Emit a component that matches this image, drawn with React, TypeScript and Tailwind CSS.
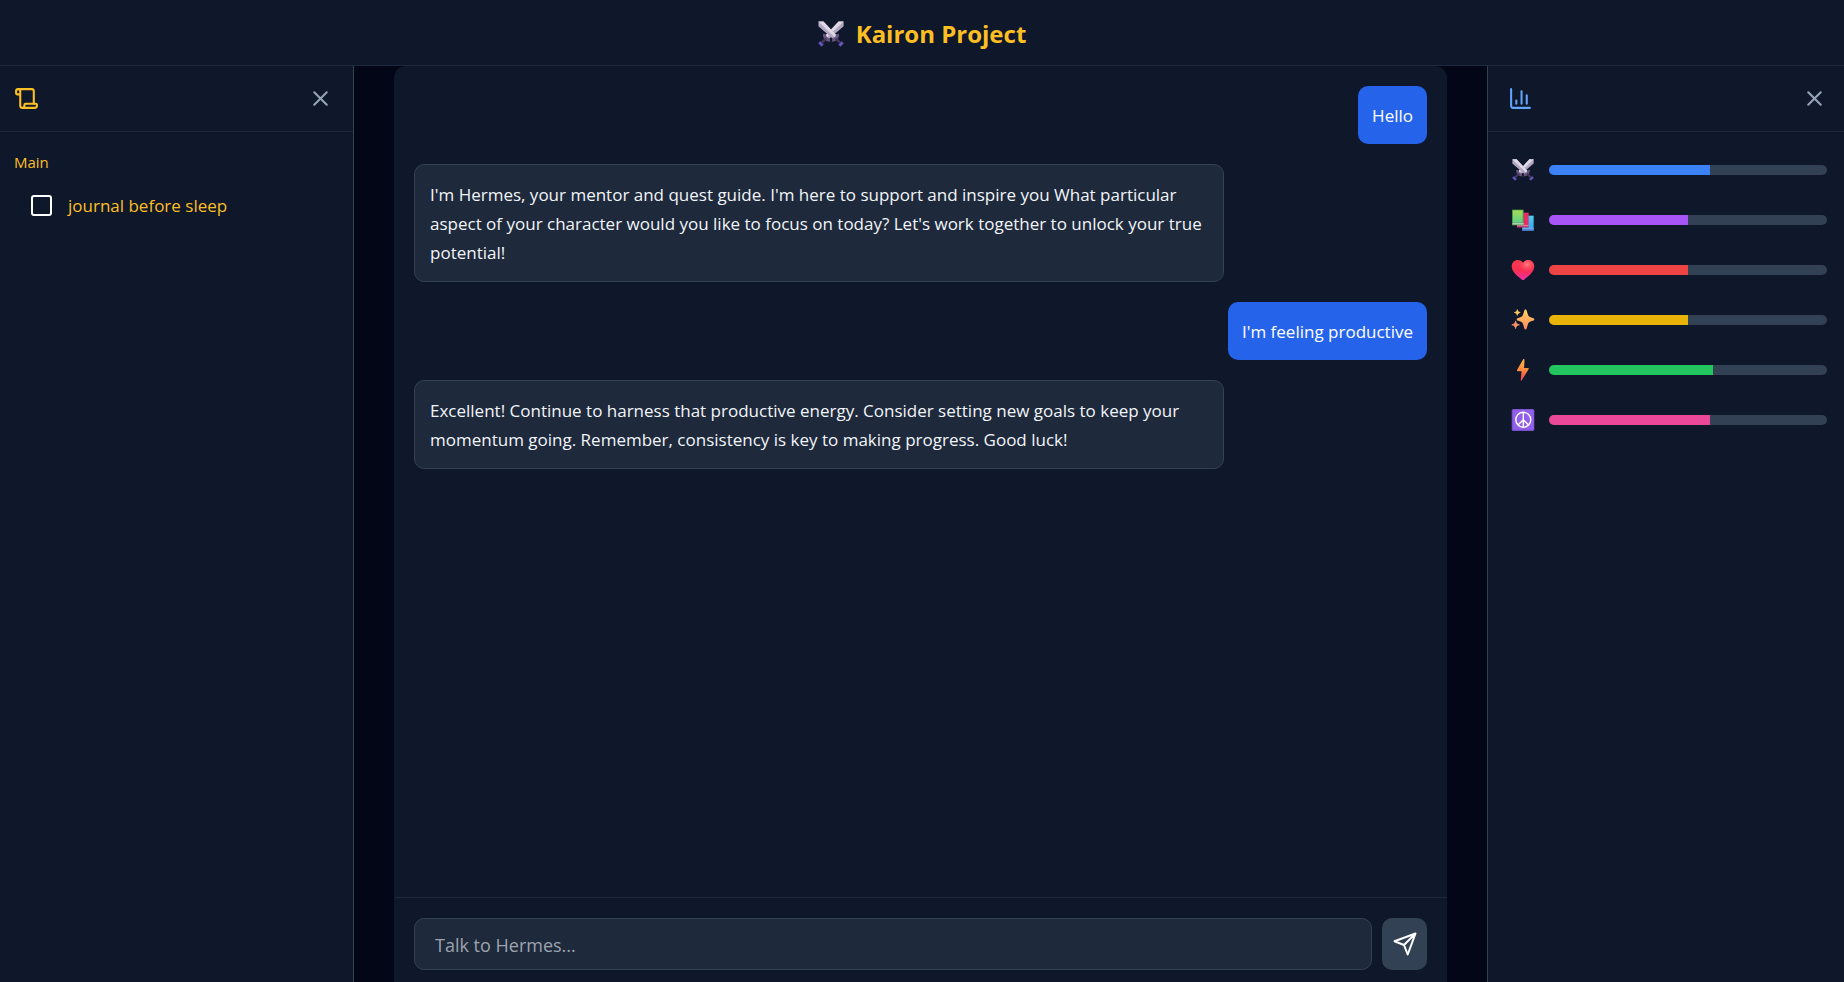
import { useState } from "react";
import type { FormEvent, ReactNode } from "react";
import { ChartColumn, Scroll, X } from "lucide-react";

function Swords({ className }: { className: string }) {
  const sword = (
    <>
      <path d="M.5.500h6.200L23.500 18.400 19 22.600.5 6.400z" fill="#b3a6c2" />
      <path d="M.5.500h6.200L23.500 18.400l-2.300 2.100L.5.500z" fill="#e0d9e6" />
      <path d="M25.800 15.800c.8 5.200-2.800 9.400-8.800 9.700l.6-4.200c2.800-.3 4.500-2 4.700-4.900z" fill="#69567f" />
      <path d="M22 21.600l5 4.800" stroke="#4a3560" strokeWidth="3" />
      <path d="M29.300 25.300l1.900 2-3.500 3.700-2.200-1.900z" fill="#6d5cc0" stroke="#5f50b0" strokeWidth="1" />
    </>
  );
  return (
    <svg viewBox="0 0 32 32" className={className} fill="none" aria-hidden="true">
      <g transform="matrix(-1 0 0 1 32 0)">{sword}</g>
      <g>{sword}</g>
    </svg>
  );
}

function Books() {
  return (
    <svg viewBox="0 0 66 66" className="size-6 p-px" aria-hidden="true">
      <defs>
        <linearGradient id="bookGreen" x1="0" y1="0" x2="0" y2="1">
          <stop offset="0" stopColor="#a6db52" />
          <stop offset="1" stopColor="#5fd08b" />
        </linearGradient>
        <linearGradient id="bookBlue" x1="0" y1="0" x2="0" y2="1">
          <stop offset="0" stopColor="#4fd0f5" />
          <stop offset="1" stopColor="#2f9df0" />
        </linearGradient>
      </defs>
      <path d="M31 20h34v45H31z" fill="url(#bookBlue)" />
      <path d="M31 56h34v4H31z" fill="#6bb0ee" />
      <path d="M31 60h34v5H31z" fill="#5a80cf" />
      <path d="M15 11h35v44H15z" fill="#e62e64" />
      <path d="M15 49h35v3H15z" fill="#e8a3bd" />
      <path d="M15 52h35v3H15z" fill="#a83a72" />
      <path d="M0 2h35v47H0z" fill="#4f9a50" />
      <path d="M3 4h29v37H3z" fill="url(#bookGreen)" />
      <path d="M2 43h33v3H2z" fill="#e5e6f0" />
    </svg>
  );
}

const heartPath =
  "M12 5C10.500 2.600 8.600 2 6.900 2 3.400 2 .7 4.700.7 8.300c0 5.800 5.800 9.700 9.900 13.200.9.8 1.900.8 2.800 0 4.100-3.500 9.900-7.400 9.900-13.200C23.300 4.700 20.600 2 17.100 2c-1.700 0-3.600.6-5.100 3z";

function Heart() {
  return (
    <svg viewBox="0 0 24 24" className="size-6" aria-hidden="true">
      <defs>
        <linearGradient id="heart" x1="0" y1="0" x2="0" y2="1">
          <stop offset="0" stopColor="#f83a4c" />
          <stop offset=".55" stopColor="#f92f55" />
          <stop offset="1" stopColor="#ee2fae" />
        </linearGradient>
        <radialGradient id="heartShine" cx=".68" cy=".22" r=".35">
          <stop offset="0" stopColor="#ff7d7d" />
          <stop offset="1" stopColor="#ff5a6a" stopOpacity="0" />
        </radialGradient>
      </defs>
      <path d={heartPath} fill="url(#heart)" />
      <path d={heartPath} fill="url(#heartShine)" />
    </svg>
  );
}

function Sparkles() {
  return (
    <svg viewBox="0 0 24 24" className="size-6" aria-hidden="true">
      <defs>
        <linearGradient id="spark" x1="0" y1="0" x2="0" y2="1">
          <stop offset="0" stopColor="#ffd75e" />
          <stop offset="1" stopColor="#ff8560" />
        </linearGradient>
      </defs>
      <path d="M14.500 1.500c.7 0 1 .5 1.200 1.200l1.200 3.900c.5 1.500 1.200 2.200 2.600 2.700l3 1c1.100.4 1.100 1.800 0 2.200l-3 1c-1.400.5-2.100 1.200-2.600 2.700l-1.200 4.300c-.4 1.200-2 1.200-2.400 0l-1.200-4.300c-.5-1.500-1.200-2.200-2.600-2.700l-3-1c-1.100-.4-1.100-1.800 0-2.200l3-1c1.400-.5 2.100-1.200 2.600-2.700l1.200-3.900c.2-.7.500-1.200 1.200-1.200z" fill="url(#spark)" />
      <path d="M6.300 1.600c.5 1.900 1 2.400 2.900 2.900-1.900.5-2.400 1-2.900 2.900-.5-1.900-1-2.400-2.900-2.900 1.900-.5 2.400-1 2.900-2.900z" fill="#ffc866" stroke="#ffc866" strokeWidth=".7" />
      <path d="M4.600 12.900c.6 2.500 1.300 3.200 3.800 3.900-2.500.6-3.200 1.300-3.800 3.900C4 18.100 3.300 17.400.8 16.800c2.500-.7 3.200-1.400 3.800-3.900z" fill="#ff9167" stroke="#ff9167" strokeWidth=".7" />
    </svg>
  );
}

function Bolt() {
  return (
    <svg viewBox="0 0 24 24" className="size-6" aria-hidden="true">
      <defs>
        <linearGradient id="bolt" x1="0" y1="0" x2="0" y2="1">
          <stop offset="0" stopColor="#ffb84d" />
          <stop offset=".5" stopColor="#ff8a3d" />
          <stop offset="1" stopColor="#ee3d52" />
        </linearGradient>
      </defs>
      <path d="M12.200 1.300 6 12.100c-.3.6 0 1.100.6 1.100h4l-.9 9c-.1.600.5.800.9.300l7.100-11.400c.3-.5 0-1-.6-1h-4l.4-8.400c0-.8-.9-1-1.300-.4z" fill="url(#bolt)" />
    </svg>
  );
}

function Peace() {
  return (
    <svg viewBox="0 0 24 24" className="size-6" aria-hidden="true">
      <rect x=".7" y="1" width="22.600" height="22" rx="1.600" fill="#7650c8" />
      <rect x="1.800" y="1.800" width="21" height="20" rx="1.200" fill="#925fea" />
      <g fill="none" stroke="#fff" strokeWidth="1.400">
        <circle cx="12.300" cy="11.800" r="7.500" />
        <path d="M12.300 4.300v15M12.300 11.800l-5.300 5.300M12.300 11.800l5.300 5.300" />
      </g>
    </svg>
  );
}

type Stat = { name: string; value: number; bar: string; icon: ReactNode };

const stats: Stat[] = [
  { name: "Strength", value: 58, bar: "bg-[#3b82f6]", icon: <Swords className="size-6 p-px" /> },
  { name: "Knowledge", value: 50, bar: "bg-[#a855f7]", icon: <Books /> },
  { name: "Health", value: 50, bar: "bg-[#ef4444]", icon: <Heart /> },
  { name: "Charisma", value: 50, bar: "bg-[#eab308]", icon: <Sparkles /> },
  { name: "Energy", value: 59, bar: "bg-[#22c55e]", icon: <Bolt /> },
  { name: "Peace", value: 58, bar: "bg-[#ec4899]", icon: <Peace /> },
];

type Message = { from: "user" | "mentor"; text: string };

const initialMessages: Message[] = [
  { from: "user", text: "Hello" },
  {
    from: "mentor",
    text: "I'm Hermes, your mentor and quest guide. I'm here to support and inspire you What particular aspect of your character would you like to focus on today? Let's work together to unlock your true potential!",
  },
  { from: "user", text: "I'm feeling productive" },
  {
    from: "mentor",
    text: "Excellent! Continue to harness that productive energy. Consider setting new goals to keep your momentum going. Remember, consistency is key to making progress. Good luck!",
  },
];

function PanelHeader({ icon, label, className }: { icon: ReactNode; label: string; className: string }) {
  return (
    <div className={`flex items-center justify-between border-b border-[#1e293b] py-5 ${className}`}>
      {icon}
      <button type="button" aria-label={label} className="text-[#94a3b8]">
        <X className="size-[25px]" />
      </button>
    </div>
  );
}

export default function App() {
  const [messages, setMessages] = useState(initialMessages);
  const [draft, setDraft] = useState("");

  const send = (event: FormEvent) => {
    event.preventDefault();
    if (!draft.trim()) return;
    setMessages([...messages, { from: "user", text: draft }]);
    setDraft("");
  };

  return (
    <div className="flex h-screen flex-col bg-[#020617] font-['Open_Sans','Noto_Sans',sans-serif] text-[17px] leading-[29px] text-[#f1f5f9]">
      <header className="flex h-[66px] shrink-0 items-center justify-center gap-3 border-b border-[#1e293b] bg-[#0f172a] pt-0.5">
        <Swords className="size-[26px]" />
        <h1 className="text-2xl font-bold text-[#fbbf24]">Kairon Project</h1>
      </header>

      <div className="flex min-h-0 flex-1">
        <aside className="w-[354px] shrink-0 border-r border-[#334155] bg-[#0f172a]">
          <PanelHeader
            icon={<Scroll className="size-[25px] text-[#fbbf24]" />}
            label="Close quests"
            className="pl-3.5 pr-5"
          />
          <section className="px-3.5 pt-4 text-[#fbbf24]">
            <h2 className="text-[15px]">Main</h2>
            <label className="mt-3.5 flex items-center gap-4 pl-[17px]">
              <input
                type="checkbox"
                className="size-[21px] appearance-none rounded-[3px] border-2 border-white checked:bg-[#fbbf24]"
              />
              journal before sleep
            </label>
          </section>
        </aside>

        <main className="flex min-w-0 flex-1 px-10">
          <div className="flex min-w-0 flex-1 flex-col rounded-t-xl bg-[#0f172a]">
            <div className="flex min-h-0 flex-1 flex-col gap-5 overflow-hidden p-5">
              {messages.map((message, i) =>
                message.from === "user" ? (
                  <p key={i} className="max-w-4/5 self-end rounded-[10px] bg-[#2563eb] px-3.5 pb-3.5 pt-[15px] text-white">
                    {message.text}
                  </p>
                ) : (
                  <p
                    key={i}
                    className="w-4/5 self-start rounded-[10px] border border-[#334155] bg-[#1e293b] px-[15px] pb-3.5 pt-[15px]"
                  >
                    {message.text}
                  </p>
                ),
              )}
            </div>
            <form onSubmit={send} className="flex gap-2.5 border-t border-[#1e293b] px-5 pb-3 pt-5">
              <input
                type="text"
                aria-label="Message"
                placeholder="Talk to Hermes..."
                value={draft}
                onChange={(event) => setDraft(event.target.value)}
                className="h-[52px] min-w-0 flex-1 rounded-[10px] border border-[#334155] bg-[#1e293b] px-5 pt-0.5 text-lg outline-none placeholder:text-[#9ca3af]"
              />
              <button
                type="submit"
                aria-label="Send"
                className="flex w-[45px] items-center justify-center rounded-[10px] bg-[#334155] text-white"
              >
                <svg viewBox="0 0 24 24" className="size-6" fill="none" stroke="currentColor" strokeWidth="2" strokeLinecap="round" strokeLinejoin="round" aria-hidden="true">
                  <path d="M22.500 1.500 1.500 9.200 11 13 14.700 22.500zM22.500 1.500 11 13" />
                </svg>
              </button>
            </form>
          </div>
        </main>

        <aside className="w-[357px] shrink-0 border-l border-[#334155] bg-[#0f172a]">
          <PanelHeader
            icon={<ChartColumn className="size-[25px] text-[#60a5fa]" />}
            label="Close stats"
            className="pl-5 pr-[17px]"
          />
          <ul className="flex flex-col gap-[26px] pl-[23px] pr-[17px] pt-[26px]">
            {stats.map((stat) => (
              <li key={stat.name} className="flex h-6 items-center gap-3.5">
                {stat.icon}
                <div
                  role="progressbar"
                  aria-label={stat.name}
                  aria-valuenow={stat.value}
                  className="h-2.5 flex-1 overflow-hidden rounded-full bg-[#334155]"
                >
                  <div className={`h-full ${stat.bar}`} style={{ width: `${stat.value}%` }} />
                </div>
              </li>
            ))}
          </ul>
        </aside>
      </div>
    </div>
  );
}
